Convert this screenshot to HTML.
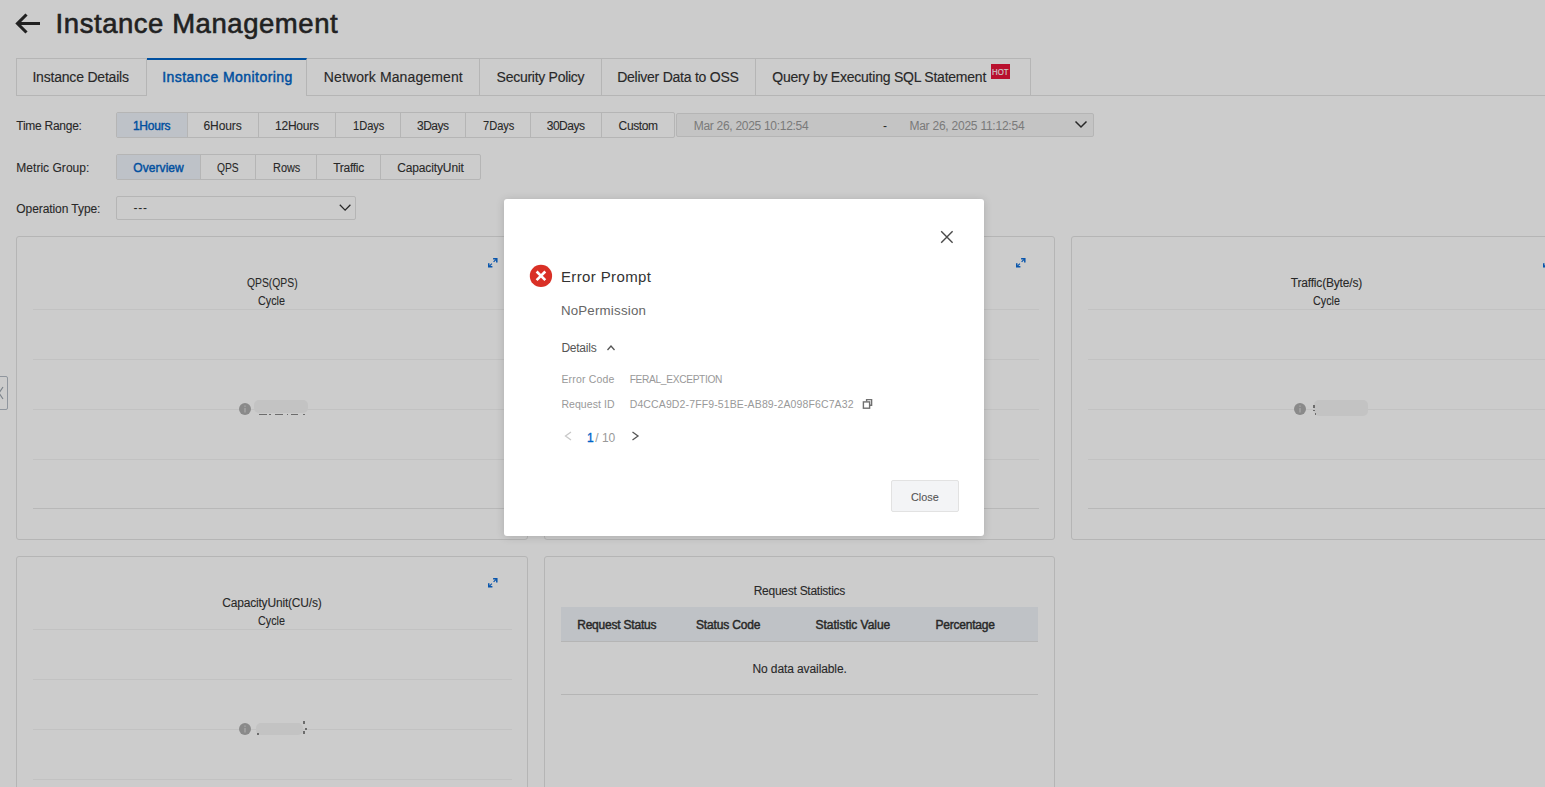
<!DOCTYPE html><html><head><meta charset="utf-8"><style>
html,body{margin:0;padding:0;}
body{width:1545px;height:787px;overflow:hidden;position:relative;background:#fff;font-family:"Liberation Sans",sans-serif;}
.t{position:absolute;white-space:nowrap;}
.r{position:absolute;box-sizing:border-box;}
svg{position:absolute;overflow:visible;left:0;top:0;}
</style></head><body>

<svg width="60" height="40"><path d="M17.5 23.5H40M26.5 14.5L17.5 23.5L26.5 32.5" stroke="#2a2a2a" stroke-width="3.1" fill="none"/></svg>
<div class="t" style="left:55.60px;top:9.72px;font-size:27.5px;line-height:27.5px;color:#2a2a2a;font-weight:400;letter-spacing:0.552px;-webkit-text-stroke:0.6px #2a2a2a;">Instance Management</div>
<div class="r" style="left:16px;top:95px;width:1529px;height:1px;background:#e3e3e3"></div>
<div class="r" style="left:16px;top:58px;width:131px;height:38px;border:1px solid #e3e3e3;"></div>
<div class="t" style="left:32.40px;top:69.95px;font-size:14px;line-height:14px;color:#333;font-weight:400;letter-spacing:-0.200px;-webkit-text-stroke:0.15px #333;">Instance Details</div>
<div class="r" style="left:147px;top:58px;width:160px;height:38px;background:#fff;border-top:2px solid #0064c8;border-right:1px solid #e3e3e3"></div>
<div class="t" style="left:162.30px;top:69.95px;font-size:14px;line-height:14px;color:#0064c8;font-weight:400;letter-spacing:0.434px;-webkit-text-stroke:0.45px #0064c8;">Instance Monitoring</div>
<div class="r" style="left:307px;top:58px;width:173px;height:38px;border:1px solid #e3e3e3;border-left:none;"></div>
<div class="t" style="left:323.80px;top:69.95px;font-size:14px;line-height:14px;color:#333;font-weight:400;letter-spacing:0.114px;-webkit-text-stroke:0.15px #333;">Network Management</div>
<div class="r" style="left:480px;top:58px;width:122px;height:38px;border:1px solid #e3e3e3;border-left:none;"></div>
<div class="t" style="left:496.60px;top:69.95px;font-size:14px;line-height:14px;color:#333;font-weight:400;letter-spacing:-0.272px;-webkit-text-stroke:0.15px #333;">Security Policy</div>
<div class="r" style="left:602px;top:58px;width:154px;height:38px;border:1px solid #e3e3e3;border-left:none;"></div>
<div class="t" style="left:617.20px;top:69.95px;font-size:14px;line-height:14px;color:#333;font-weight:400;letter-spacing:-0.245px;-webkit-text-stroke:0.15px #333;">Deliver Data to OSS</div>
<div class="r" style="left:756px;top:58px;width:275px;height:38px;border:1px solid #e3e3e3;border-left:none;"></div>
<div class="t" style="left:772.30px;top:69.95px;font-size:14px;line-height:14px;color:#333;font-weight:400;letter-spacing:-0.235px;-webkit-text-stroke:0.15px #333;">Query by Executing SQL Statement</div>
<div class="r" style="left:991px;top:64px;width:19px;height:14.6px;background:#e8143a"></div>
<div class="t" style="left:991.80px;top:67.07px;font-size:9.6px;line-height:9.6px;color:#fff;font-weight:400;letter-spacing:0.000px;-webkit-text-stroke:0.15px #fff;transform:scaleX(0.8141);transform-origin:0 0;">HOT</div>
<div class="t" style="left:16.30px;top:119.84px;font-size:12px;line-height:12px;color:#333;font-weight:400;letter-spacing:-0.262px;-webkit-text-stroke:0.1px #333;">Time Range:</div>
<div class="r" style="left:116px;top:112px;width:559px;height:26px;border:1px solid #e3e3e3;border-radius:2px"></div>
<div class="r" style="left:117px;top:113px;width:70px;height:24px;background:#eef3fb"></div>
<div class="r" style="left:187px;top:112px;width:1px;height:26px;background:#e3e3e3"></div>
<div class="t" style="left:132.90px;top:119.84px;font-size:12px;line-height:12px;color:#0064c8;font-weight:400;letter-spacing:-0.197px;-webkit-text-stroke:0.4px #0064c8;">1Hours</div>
<div class="r" style="left:258px;top:112px;width:1px;height:26px;background:#e3e3e3"></div>
<div class="t" style="left:203.50px;top:119.84px;font-size:12px;line-height:12px;color:#333;font-weight:400;letter-spacing:-0.097px;-webkit-text-stroke:0.1px #333;">6Hours</div>
<div class="r" style="left:335px;top:112px;width:1px;height:26px;background:#e3e3e3"></div>
<div class="t" style="left:275.05px;top:119.84px;font-size:12px;line-height:12px;color:#333;font-weight:400;letter-spacing:-0.243px;-webkit-text-stroke:0.1px #333;">12Hours</div>
<div class="r" style="left:400px;top:112px;width:1px;height:26px;background:#e3e3e3"></div>
<div class="t" style="left:352.70px;top:119.84px;font-size:12px;line-height:12px;color:#333;font-weight:400;letter-spacing:0.000px;-webkit-text-stroke:0.1px #333;transform:scaleX(0.9232);transform-origin:0 0;">1Days</div>
<div class="r" style="left:465px;top:112px;width:1px;height:26px;background:#e3e3e3"></div>
<div class="t" style="left:416.95px;top:119.84px;font-size:12px;line-height:12px;color:#333;font-weight:400;letter-spacing:-0.478px;-webkit-text-stroke:0.1px #333;">3Days</div>
<div class="r" style="left:530px;top:112px;width:1px;height:26px;background:#e3e3e3"></div>
<div class="t" style="left:482.50px;top:119.84px;font-size:12px;line-height:12px;color:#333;font-weight:400;letter-spacing:0.000px;-webkit-text-stroke:0.1px #333;transform:scaleX(0.9232);transform-origin:0 0;">7Days</div>
<div class="r" style="left:601px;top:112px;width:1px;height:26px;background:#e3e3e3"></div>
<div class="t" style="left:546.70px;top:119.84px;font-size:12px;line-height:12px;color:#333;font-weight:400;letter-spacing:-0.478px;-webkit-text-stroke:0.1px #333;">30Days</div>
<div class="t" style="left:618.60px;top:119.84px;font-size:12px;line-height:12px;color:#333;font-weight:400;letter-spacing:-0.370px;-webkit-text-stroke:0.1px #333;">Custom</div>
<div class="r" style="left:676px;top:113px;width:418px;height:24px;background:#f5f5f5;border:1px solid #e3e3e3;border-radius:2px"></div>
<div class="t" style="left:693.70px;top:119.84px;font-size:12px;line-height:12px;color:#999;font-weight:400;letter-spacing:-0.289px;">Mar 26, 2025 10:12:54</div>
<div class="t" style="left:883.00px;top:119.84px;font-size:12px;line-height:12px;color:#333;font-weight:400;letter-spacing:0.000px;">-</div>
<div class="t" style="left:909.40px;top:119.84px;font-size:12px;line-height:12px;color:#999;font-weight:400;letter-spacing:-0.235px;">Mar 26, 2025 11:12:54</div>
<svg width="1" height="1"><path d="M1075.5 121.5L1081 127L1086.5 121.5" stroke="#333" stroke-width="1.5" fill="none"/></svg>
<div class="t" style="left:16.30px;top:161.84px;font-size:12px;line-height:12px;color:#333;font-weight:400;letter-spacing:0.029px;-webkit-text-stroke:0.1px #333;">Metric Group:</div>
<div class="r" style="left:116px;top:154px;width:365px;height:26px;border:1px solid #e3e3e3;border-radius:2px"></div>
<div class="r" style="left:117px;top:155px;width:83px;height:24px;background:#eef3fb"></div>
<div class="r" style="left:200px;top:154px;width:1px;height:26px;background:#e3e3e3"></div>
<div class="t" style="left:133.30px;top:161.84px;font-size:12px;line-height:12px;color:#0064c8;font-weight:400;letter-spacing:0.065px;-webkit-text-stroke:0.4px #0064c8;">Overview</div>
<div class="r" style="left:255px;top:154px;width:1px;height:26px;background:#e3e3e3"></div>
<div class="t" style="left:217.20px;top:161.84px;font-size:12px;line-height:12px;color:#333;font-weight:400;letter-spacing:0.000px;-webkit-text-stroke:0.1px #333;transform:scaleX(0.8564);transform-origin:0 0;">QPS</div>
<div class="r" style="left:316px;top:154px;width:1px;height:26px;background:#e3e3e3"></div>
<div class="t" style="left:272.70px;top:161.84px;font-size:12px;line-height:12px;color:#333;font-weight:400;letter-spacing:0.000px;-webkit-text-stroke:0.1px #333;transform:scaleX(0.9098);transform-origin:0 0;">Rows</div>
<div class="r" style="left:380px;top:154px;width:1px;height:26px;background:#e3e3e3"></div>
<div class="t" style="left:333.20px;top:161.84px;font-size:12px;line-height:12px;color:#333;font-weight:400;letter-spacing:-0.279px;-webkit-text-stroke:0.1px #333;">Traffic</div>
<div class="t" style="left:397.20px;top:161.84px;font-size:12px;line-height:12px;color:#333;font-weight:400;letter-spacing:-0.127px;-webkit-text-stroke:0.1px #333;">CapacityUnit</div>
<div class="t" style="left:16.30px;top:202.84px;font-size:12px;line-height:12px;color:#333;font-weight:400;letter-spacing:-0.075px;-webkit-text-stroke:0.1px #333;">Operation Type:</div>
<div class="r" style="left:116px;top:196px;width:240px;height:24px;border:1px solid #e3e3e3;border-radius:2px"></div>
<div class="t" style="left:133.50px;top:202.44px;font-size:12px;line-height:12px;color:#333;font-weight:400;letter-spacing:0.704px;">---</div>
<svg width="1" height="1"><path d="M339.8 204.8L345.1 210.1L350.4 204.8" stroke="#333" stroke-width="1.3" fill="none"/></svg>
<div class="r" style="left:16px;top:236px;width:512px;height:304px;border:1px solid #e3e3e3;border-radius:3px"></div>
<svg style="left:488px;top:257.5px" width="11" height="10"><path d="M5.1 0.75H8.8V4.4M0.75 5.2V8.8H4.4" stroke="#0d6cd8" stroke-width="1.5" fill="none"/><path d="M8.6 0.9L5.6 3.9M0.9 8.6L3.9 5.6" stroke="#0d6cd8" stroke-width="1.2" fill="none"/></svg>
<div class="t" style="left:246.70px;top:276.84px;font-size:12px;line-height:12px;color:#333;font-weight:400;letter-spacing:0.000px;-webkit-text-stroke:0.1px #333;transform:scaleX(0.8623);transform-origin:0 0;">QPS(QPS)</div>
<div class="t" style="left:258.35px;top:294.84px;font-size:12px;line-height:12px;color:#333;font-weight:400;letter-spacing:0.000px;-webkit-text-stroke:0.1px #333;transform:scaleX(0.9000);transform-origin:0 0;">Cycle</div>
<div class="r" style="left:32.5px;top:309px;width:479px;height:1px;background:#f3f3f3"></div>
<div class="r" style="left:32.5px;top:359px;width:479px;height:1px;background:#f3f3f3"></div>
<div class="r" style="left:32.5px;top:409px;width:479px;height:1px;background:#f3f3f3"></div>
<div class="r" style="left:32.5px;top:459px;width:479px;height:1px;background:#f3f3f3"></div>
<div class="r" style="left:32.5px;top:508px;width:479px;height:1px;background:#e6e6e6"></div>
<svg style="left:239px;top:403px" width="12" height="12"><circle cx="6" cy="6" r="6" fill="#adadad"/><rect x="5.3" y="5" width="1.4" height="4.5" fill="#d0d0d0"/><rect x="5.3" y="2.5" width="1.4" height="1.4" fill="#d0d0d0"/></svg>
<div class="r" style="left:254.2px;top:400.1px;width:53.6px;height:12.9px;background:#f4f4f4;border-radius:5px"></div>
<div class="r" style="left:259px;top:414px;width:8px;height:1px;background:#888"></div>
<div class="r" style="left:268.7px;top:414px;width:2.3px;height:1px;background:#888"></div>
<div class="r" style="left:275.4px;top:414px;width:7.9px;height:1px;background:#888"></div>
<div class="r" style="left:286.5px;top:414px;width:1.5px;height:1px;background:#888"></div>
<div class="r" style="left:291.2px;top:414px;width:7.2px;height:1px;background:#888"></div>
<div class="r" style="left:303px;top:414px;width:1.8px;height:1px;background:#888"></div>
<div class="r" style="left:544px;top:236px;width:511px;height:304px;border:1px solid #e3e3e3;border-radius:3px"></div>
<svg style="left:1016px;top:257.5px" width="11" height="10"><path d="M5.1 0.75H8.8V4.4M0.75 5.2V8.8H4.4" stroke="#0d6cd8" stroke-width="1.5" fill="none"/><path d="M8.6 0.9L5.6 3.9M0.9 8.6L3.9 5.6" stroke="#0d6cd8" stroke-width="1.2" fill="none"/></svg>
<div class="t" style="left:785.25px;top:276.84px;font-size:12px;line-height:12px;color:#333;font-weight:400;letter-spacing:-0.500px;-webkit-text-stroke:0.1px #333;">Rows</div>
<div class="t" style="left:785.85px;top:294.84px;font-size:12px;line-height:12px;color:#333;font-weight:400;letter-spacing:0.000px;-webkit-text-stroke:0.1px #333;transform:scaleX(0.9000);transform-origin:0 0;">Cycle</div>
<div class="r" style="left:560.5px;top:309px;width:478px;height:1px;background:#f3f3f3"></div>
<div class="r" style="left:560.5px;top:359px;width:478px;height:1px;background:#f3f3f3"></div>
<div class="r" style="left:560.5px;top:409px;width:478px;height:1px;background:#f3f3f3"></div>
<div class="r" style="left:560.5px;top:459px;width:478px;height:1px;background:#f3f3f3"></div>
<div class="r" style="left:560.5px;top:508px;width:478px;height:1px;background:#e6e6e6"></div>
<svg style="left:767px;top:403px" width="12" height="12"><circle cx="6" cy="6" r="6" fill="#adadad"/><rect x="5.3" y="5" width="1.4" height="4.5" fill="#d0d0d0"/><rect x="5.3" y="2.5" width="1.4" height="1.4" fill="#d0d0d0"/></svg>
<div class="r" style="left:782px;top:400px;width:54px;height:13px;background:#f4f4f4;border-radius:5px"></div>
<div class="r" style="left:1071px;top:236px;width:511px;height:304px;border:1px solid #e3e3e3;border-radius:3px"></div>
<svg style="left:1543px;top:257.5px" width="11" height="10"><path d="M5.1 0.75H8.8V4.4M0.75 5.2V8.8H4.4" stroke="#0d6cd8" stroke-width="1.5" fill="none"/><path d="M8.6 0.9L5.6 3.9M0.9 8.6L3.9 5.6" stroke="#0d6cd8" stroke-width="1.2" fill="none"/></svg>
<div class="t" style="left:1290.75px;top:276.84px;font-size:12px;line-height:12px;color:#333;font-weight:400;letter-spacing:-0.180px;-webkit-text-stroke:0.1px #333;">Traffic(Byte/s)</div>
<div class="t" style="left:1312.85px;top:294.84px;font-size:12px;line-height:12px;color:#333;font-weight:400;letter-spacing:0.000px;-webkit-text-stroke:0.1px #333;transform:scaleX(0.9000);transform-origin:0 0;">Cycle</div>
<div class="r" style="left:1087.5px;top:309px;width:478px;height:1px;background:#f3f3f3"></div>
<div class="r" style="left:1087.5px;top:359px;width:478px;height:1px;background:#f3f3f3"></div>
<div class="r" style="left:1087.5px;top:409px;width:478px;height:1px;background:#f3f3f3"></div>
<div class="r" style="left:1087.5px;top:459px;width:478px;height:1px;background:#f3f3f3"></div>
<div class="r" style="left:1087.5px;top:508px;width:478px;height:1px;background:#e6e6e6"></div>
<svg style="left:1294px;top:403px" width="12" height="12"><circle cx="6" cy="6" r="6" fill="#adadad"/><rect x="5.3" y="5" width="1.4" height="4.5" fill="#d0d0d0"/><rect x="5.3" y="2.5" width="1.4" height="1.4" fill="#d0d0d0"/></svg>
<div class="r" style="left:1314px;top:400px;width:54px;height:15.7px;background:#f4f4f4;border-radius:5px"></div>
<div class="r" style="left:1313px;top:405px;width:1.5px;height:3px;background:#888"></div>
<div class="r" style="left:1313px;top:410px;width:1.5px;height:1px;background:#888"></div>
<div class="r" style="left:1314.5px;top:413px;width:1.5px;height:2px;background:#888"></div>
<div class="r" style="left:16px;top:556px;width:512px;height:304px;border:1px solid #e3e3e3;border-radius:3px"></div>
<svg style="left:488px;top:577.5px" width="11" height="10"><path d="M5.1 0.75H8.8V4.4M0.75 5.2V8.8H4.4" stroke="#0d6cd8" stroke-width="1.5" fill="none"/><path d="M8.6 0.9L5.6 3.9M0.9 8.6L3.9 5.6" stroke="#0d6cd8" stroke-width="1.2" fill="none"/></svg>
<div class="t" style="left:222.20px;top:596.84px;font-size:12px;line-height:12px;color:#333;font-weight:400;letter-spacing:-0.182px;-webkit-text-stroke:0.1px #333;">CapacityUnit(CU/s)</div>
<div class="t" style="left:258.35px;top:614.84px;font-size:12px;line-height:12px;color:#333;font-weight:400;letter-spacing:0.000px;-webkit-text-stroke:0.1px #333;transform:scaleX(0.9000);transform-origin:0 0;">Cycle</div>
<div class="r" style="left:32.5px;top:629px;width:479px;height:1px;background:#f3f3f3"></div>
<div class="r" style="left:32.5px;top:679px;width:479px;height:1px;background:#f3f3f3"></div>
<div class="r" style="left:32.5px;top:729px;width:479px;height:1px;background:#f3f3f3"></div>
<div class="r" style="left:32.5px;top:779px;width:479px;height:1px;background:#f3f3f3"></div>
<div class="r" style="left:32.5px;top:828px;width:479px;height:1px;background:#e6e6e6"></div>
<svg style="left:239px;top:723px" width="12" height="12"><circle cx="6" cy="6" r="6" fill="#adadad"/><rect x="5.3" y="5" width="1.4" height="4.5" fill="#d0d0d0"/><rect x="5.3" y="2.5" width="1.4" height="1.4" fill="#d0d0d0"/></svg>
<div class="r" style="left:255.9px;top:722.9px;width:46.9px;height:11.9px;background:#f4f4f4;border-radius:5px"></div>
<div class="r" style="left:257px;top:733px;width:1.5px;height:1.5px;background:#888"></div>
<div class="r" style="left:303px;top:721px;width:1.5px;height:3px;background:#888"></div>
<div class="r" style="left:305px;top:728px;width:1.5px;height:1.5px;background:#888"></div>
<div class="r" style="left:303px;top:731px;width:1.5px;height:3px;background:#888"></div>
<div class="r" style="left:544px;top:556px;width:511px;height:304px;border:1px solid #e3e3e3;border-radius:3px"></div>
<div class="t" style="left:753.70px;top:585.04px;font-size:12px;line-height:12px;color:#333;font-weight:400;letter-spacing:-0.261px;-webkit-text-stroke:0.1px #333;">Request Statistics</div>
<div class="r" style="left:561px;top:607px;width:477px;height:35px;background:#eff3f8;border-bottom:1px solid #e3e3e3"></div>
<div class="t" style="left:577.20px;top:618.84px;font-size:12px;line-height:12px;color:#333;font-weight:400;letter-spacing:-0.211px;-webkit-text-stroke:0.45px #333;">Request Status</div>
<div class="t" style="left:696.00px;top:618.84px;font-size:12px;line-height:12px;color:#333;font-weight:400;letter-spacing:-0.167px;-webkit-text-stroke:0.45px #333;">Status Code</div>
<div class="t" style="left:815.60px;top:618.84px;font-size:12px;line-height:12px;color:#333;font-weight:400;letter-spacing:-0.034px;-webkit-text-stroke:0.45px #333;">Statistic Value</div>
<div class="t" style="left:935.40px;top:618.84px;font-size:12px;line-height:12px;color:#333;font-weight:400;letter-spacing:-0.211px;-webkit-text-stroke:0.45px #333;">Percentage</div>
<div class="t" style="left:752.50px;top:663.34px;font-size:12px;line-height:12px;color:#333;font-weight:400;letter-spacing:-0.102px;-webkit-text-stroke:0.1px #333;">No data available.</div>
<div class="r" style="left:561px;top:694px;width:477px;height:1px;background:#e3e3e3"></div>
<div class="r" style="left:-4px;top:376px;width:12px;height:34px;background:#fff;border:1px solid #b4bcc6;border-radius:2px"></div>
<svg width="1" height="1"><path d="M3 387L-1 393L3 399" stroke="#9aa3ad" stroke-width="1.2" fill="none"/></svg>
<div class="r" style="left:0;top:0;width:1545px;height:787px;background:rgba(0,0,0,0.2)"></div>
<div class="r" style="left:503.8px;top:199px;width:480px;height:337.3px;background:#fff;border-radius:3px;box-shadow:0 1px 8px rgba(0,0,0,0.16)"></div>
<svg width="1" height="1"><path d="M941.2 231.3L952.6 242.7M952.6 231.3L941.2 242.7" stroke="#4a4a4a" stroke-width="1.4" fill="none"/></svg>
<svg width="1" height="1"><circle cx="540.95" cy="275.9" r="11.15" fill="#d93026"/><path d="M536.6 271.5L545.3 280.2M545.3 271.5L536.6 280.2" stroke="#fff" stroke-width="2.6" fill="none"/></svg>
<div class="t" style="left:560.90px;top:269.30px;font-size:15px;line-height:15px;color:#333;font-weight:400;letter-spacing:0.384px;">Error Prompt</div>
<div class="t" style="left:560.90px;top:304.44px;font-size:13.3px;line-height:13.3px;color:#666;font-weight:400;letter-spacing:0.203px;">NoPermission</div>
<div class="t" style="left:561.40px;top:342.04px;font-size:12px;line-height:12px;color:#555;font-weight:400;letter-spacing:-0.230px;">Details</div>
<svg width="1" height="1"><path d="M607.5 350L611 346L614.5 350" stroke="#555" stroke-width="1.3" fill="none"/></svg>
<div class="t" style="left:561.40px;top:374.31px;font-size:10.5px;line-height:10.5px;color:#999;font-weight:400;letter-spacing:0.176px;">Error Code</div>
<div class="t" style="left:629.70px;top:374.57px;font-size:10.2px;line-height:10.2px;color:#999;font-weight:400;letter-spacing:-0.330px;">FERAL_EXCEPTION</div>
<div class="t" style="left:561.40px;top:399.31px;font-size:10.5px;line-height:10.5px;color:#999;font-weight:400;letter-spacing:0.073px;">Request ID</div>
<div class="t" style="left:629.70px;top:399.31px;font-size:10.5px;line-height:10.5px;color:#999;font-weight:400;letter-spacing:0.126px;">D4CCA9D2-7FF9-51BE-AB89-2A098F6C7A32</div>
<svg width="1" height="1"><path d="M866.6 401.4V399.6H871.6V405.3H870" stroke="#707070" stroke-width="1.4" fill="none"/><rect x="863.4" y="401.9" width="6.2" height="6.3" stroke="#707070" stroke-width="1.4" fill="none"/></svg>
<svg width="1" height="1"><path d="M571 432L565.5 436L571 440" stroke="#c8c8c8" stroke-width="1.3" fill="none"/><path d="M632.5 432L638 436L632.5 440" stroke="#555" stroke-width="1.3" fill="none"/></svg>
<div class="t" style="left:587.00px;top:431.84px;font-size:12px;line-height:12px;color:#0064c8;font-weight:400;letter-spacing:0.000px;-webkit-text-stroke:0.35px #0064c8;">1</div>
<div class="t" style="left:595.20px;top:431.84px;font-size:12px;line-height:12px;color:#999;font-weight:400;letter-spacing:0.019px;">/ 10</div>
<div class="r" style="left:891px;top:480px;width:68px;height:32px;background:#f3f4f6;border:1px solid #e2e2e2;border-radius:2px"></div>
<div class="t" style="left:911.00px;top:491.61px;font-size:11.8px;line-height:11.8px;color:#555;font-weight:400;letter-spacing:0.000px;-webkit-text-stroke:0.1px #555;transform:scaleX(0.9183);transform-origin:0 0;">Close</div>
</body></html>
